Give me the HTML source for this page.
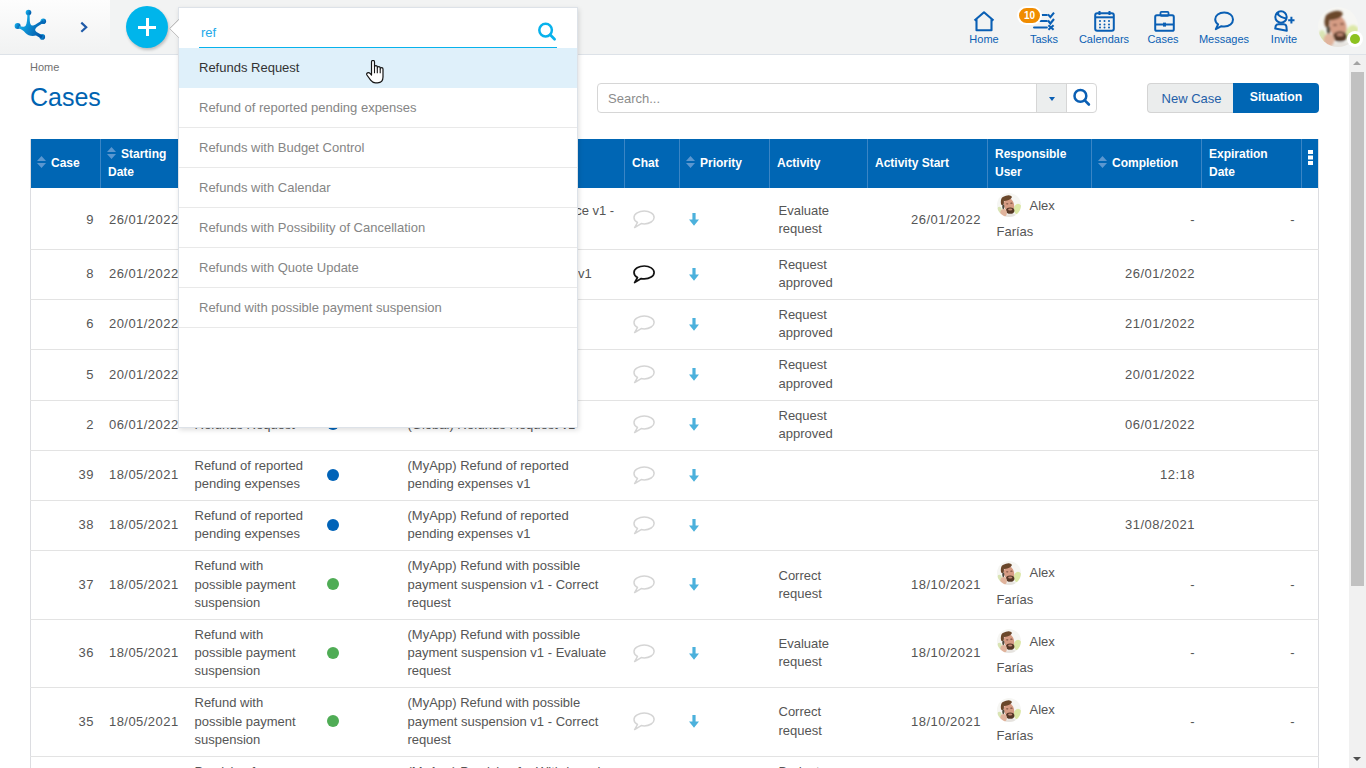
<!DOCTYPE html>
<html><head><meta charset="utf-8">
<style>
*{box-sizing:border-box;margin:0;padding:0}
html,body{width:1366px;height:768px;overflow:hidden;background:#fff;font-family:"Liberation Sans",sans-serif;color:#555}
svg{display:block}
#hdr{position:absolute;left:0;top:0;width:1366px;height:55px;background:#f2f3f3;border-bottom:1px solid #dde2e8}
#logo{position:absolute;left:0;top:0;width:110px;height:54px;background:linear-gradient(#fdfdfd,#f1f2f2)}
#logo svg{position:absolute;left:0;top:0}
#logo #chev{left:79px;top:20.5px}
#chev{position:absolute;left:79px;top:20px}
#plus{position:absolute;left:126px;top:6px;width:42px;height:42px;border-radius:50%;background:#00b5eb;box-shadow:1px 2px 3px rgba(0,0,0,.22)}
#plus:before{content:"";position:absolute;left:12px;top:19.5px;width:18px;height:3px;background:#fff}
#plus:after{content:"";position:absolute;left:19.5px;top:12px;width:3px;height:18px;background:#fff}
.nav{position:absolute;top:0;height:54px;text-align:center;font-size:11px;color:#0a5fb4}
.nav svg{position:absolute}
.nav span{position:absolute;top:32.5px;left:0;width:100%;text-align:center;white-space:nowrap}
#badge{position:absolute;left:1017px;top:6px;width:25px;height:19px;border-radius:10px;background:#f08c00;border:2px solid #fff;color:#fff;font-size:10px;font-weight:bold;text-align:center;line-height:15px}
#avatar{position:absolute;left:1318px;top:7px;width:40px;height:40px}
#online{position:absolute;left:1347px;top:31px;width:16px;height:16px;border-radius:50%;background:#fff}
#online:after{content:"";position:absolute;left:3px;top:3px;width:10px;height:10px;border-radius:50%;background:#8dc21f}
#scroll{position:absolute;left:1349px;top:55px;width:17px;height:713px;background:#f1f1f1}
#thumb{position:absolute;left:2px;top:17px;width:13px;height:514px;background:#c1c1c1}
#sup{position:absolute;left:4px;top:6px;width:0;height:0;border-left:4.5px solid transparent;border-right:4.5px solid transparent;border-bottom:4.5px solid #a3a3a3}
#sdn{position:absolute;left:4px;top:702px;width:0;height:0;border-left:4.5px solid transparent;border-right:4.5px solid transparent;border-top:4.5px solid #505050}
#crumb{position:absolute;left:30px;top:61px;font-size:11px;color:#707070}
#title{position:absolute;left:30px;top:83px;font-size:25px;color:#0063b1;letter-spacing:0}
#search{position:absolute;left:597px;top:83px;width:500px;height:30px;border:1px solid #d6d6d6;border-radius:4px;background:#fff}
#search .ph{position:absolute;left:10px;top:7px;font-size:13px;color:#8c8c8c}
#search .tg{position:absolute;left:438px;top:-1px;width:31px;height:30px;background:#eceeee;border:1px solid #d6d6d6}
#search .tg:after{content:"";position:absolute;left:12px;top:13px;border-left:3.5px solid transparent;border-right:3.5px solid transparent;border-top:4px solid #0a5fb4}
#search svg{position:absolute;left:474px;top:3px}
#btns{position:absolute;left:1147px;top:83px;width:172px;height:30px}
#bnew{position:absolute;left:0;top:0;width:87px;height:30px;background:#ebeded;border:1px solid #d4d4d4;border-right:none;border-radius:4px 0 0 4px;color:#1f5fa8;font-size:13px;line-height:30px;text-align:center;padding-left:1px}
#bsit{position:absolute;left:86px;top:0;width:86px;height:30px;background:#0066b4;border-radius:0 4px 4px 0;color:#fff;font-size:12.3px;font-weight:bold;line-height:29px;text-align:center}
table{border-collapse:collapse;table-layout:fixed}
#tbl{position:absolute;left:30px;top:139px;width:1289px;border-left:1px solid #dcdde1;border-right:1px solid #dcdde1}
#tbl th{background:#0066b4;color:#fff;font-weight:bold;font-size:12px;text-align:left;line-height:18.5px;padding:5px 7px 6px 7px;border-left:1px solid #3a85c5;height:49px;vertical-align:middle}
#tbl th:first-child{border-left:none}
#tbl th .sort{display:inline-block;vertical-align:-1px;margin-right:5px;margin-left:-1px}
#tbl th.menu{padding:11px 0 0 0;text-align:center;vertical-align:top}
#tbl th.menu svg{margin:0 auto}
#tbl td{font-size:13px;line-height:18.2px;padding:5.925px 7px 6.925px 9px;border-bottom:1px solid #e3e3e3;vertical-align:middle;color:#555;overflow:hidden}
#tbl td.r{text-align:right;padding-right:6.5px;padding-left:0;letter-spacing:.5px}
#tbl td.dd{letter-spacing:.45px;padding-left:8.5px}
#tbl td.dt{padding-left:6.5px}
.dot{position:relative;top:-0.5px}
.dot{display:block;width:12px;height:12px;border-radius:50%}
#tbl td.ch{padding-left:8px}
#tbl td.pri{padding-left:9px}
.user{position:relative}
.u1{height:29.95px;white-space:nowrap}
.u1 .av{vertical-align:top;margin-top:0}
.u1 .un1{display:inline-block;vertical-align:top;margin-top:3.5px}
#tbl tr.r1 td{padding-top:7.925px;padding-bottom:4.925px}
#tbl tr.r1 td.us{padding-top:5.425px;padding-bottom:7.425px}
.av{display:inline-block;vertical-align:middle;margin-right:9px}
.av svg{width:24px;height:24px}
.un1{vertical-align:middle}
#dd{position:absolute;left:178px;top:7px;width:400px;height:421px;background:#fff;border:1px solid #dde2e8;box-shadow:1px 2px 5px rgba(0,0,0,.13)}
#ddarrow{position:absolute;left:168.5px;top:19px}
#ddin{position:absolute;left:20px;top:17px;width:358px;height:23px;border-bottom:1px solid #08b2ec;font-size:13px;color:#22aaea;padding-left:2px;line-height:16px}
#ddin svg{position:absolute;left:338px;top:-4px}
#ddlist{position:absolute;left:0;top:40px;width:398px}
.it{height:40px;border-bottom:1px solid #e9e9e9;font-size:13px;color:#858585;padding-left:20px;line-height:39px;white-space:nowrap}
.it.hl{background:#dff0fa;color:#333;border-bottom-color:#dff0fa}
#cursor{position:absolute;left:366px;top:60px}
</style></head><body>
<div id="hdr">
  <div id="logo">
    <svg width="60" height="54" viewBox="0 0 60 54">
      <defs><linearGradient id="lg" x1="0" y1="0.3" x2="1" y2="0.8"><stop offset="0" stop-color="#16b6ef"/><stop offset="1" stop-color="#004ea3"/></linearGradient></defs>
      <g fill="url(#lg)" stroke="url(#lg)">
        <circle cx="28.5" cy="12.6" r="2.8" stroke="none"/>
        <circle cx="17.6" cy="25.9" r="3" stroke="none"/>
        <circle cx="43.3" cy="21.2" r="2.8" stroke="none"/>
        <circle cx="42.3" cy="36.9" r="2.8" stroke="none"/>
        <path d="M27.4 14.5 C27.3 19 27 23.5 25.6 25.8 C24.2 27.4 21.5 26.8 19.3 26 L18.6 28.3 C21 29 23.5 30.6 25.5 33 C28 35.8 32 36.6 36 35.6 L41.2 38.4 L43 35.6 C39.6 33.6 36.4 32.6 35.4 30.8 C34.6 29 36 27.6 38 26.2 L43.9 22.4 L42.7 20 C39 22.4 35.6 24.8 33.2 25.4 C31 25.9 30.1 24.4 29.8 21 L29.6 14.5 Z" stroke="none"/>
      </g>
    </svg>
    <svg id="chev" width="10" height="14" viewBox="0 0 10 14"><path d="M2.3 1.6 L7.2 6.2 L2.3 10.8" fill="none" stroke="#1e5aa8" stroke-width="2.2"/></svg>
  </div>
  <div id="plus"></div>
  <div class="nav" style="left:964px;width:40px">
    <svg style="left:9px;top:11px" width="22" height="21" viewBox="0 0 22 21"><path d="M1.5 9.5 L11 1.3 L20.5 9.5 M3.5 8 V19.3 H18.5 V8" fill="none" stroke="#0a5fb4" stroke-width="2.1" stroke-linejoin="round"/></svg>
    <span>Home</span>
  </div>
  <div class="nav" style="left:1024px;width:40px">
    <svg style="left:9px;top:11px" width="24" height="20" viewBox="0 0 24 20"><path d="M9 4 H13.8 M7 10 H13.8 M1.1 16.5 H13.8" stroke="#0a5fb4" stroke-width="2.2" fill="none" stroke-linecap="round"/><path d="M15 3.4 L17.4 6.1 L21 1.6 M15 9.5 L17.4 12.5 L21 8" stroke="#0a5fb4" stroke-width="2.1" fill="none"/><path d="M15.4 14.2 L20.6 18.8 M20.6 14.2 L15.4 18.8" stroke="#0a5fb4" stroke-width="2.1" fill="none"/></svg>
    <span>Tasks</span>
  </div>
  <div id="badge">10</div>
  <div class="nav" style="left:1077px;width:54px">
    <svg style="left:17px;top:10px" width="21" height="22" viewBox="0 0 21 22"><rect x="1.2" y="3.2" width="18.6" height="17.5" rx="2" fill="none" stroke="#0a5fb4" stroke-width="2"/><path d="M1.5 7.3 H19.5" stroke="#0a5fb4" stroke-width="2"/><path d="M5.5 1 V5 M15.5 1 V5" stroke="#0a5fb4" stroke-width="2"/><g fill="#0a5fb4"><circle cx="6" cy="11" r="1"/><circle cx="10.5" cy="11" r="1"/><circle cx="15" cy="11" r="1"/><circle cx="6" cy="14.4" r="1"/><circle cx="10.5" cy="14.4" r="1"/><circle cx="15" cy="14.4" r="1"/><circle cx="6" cy="17.6" r="1"/><circle cx="10.5" cy="17.6" r="1"/><circle cx="15" cy="17.6" r="1"/></g></svg>
    <span>Calendars</span>
  </div>
  <div class="nav" style="left:1143px;width:40px">
    <svg style="left:11px;top:10px" width="21" height="22" viewBox="0 0 21 22"><rect x="6.5" y="1.8" width="8" height="4" rx="1" fill="none" stroke="#0a5fb4" stroke-width="1.8"/><rect x="1.2" y="5.3" width="18.6" height="15.5" rx="1.6" fill="none" stroke="#0a5fb4" stroke-width="2"/><path d="M1.5 14.5 H19.5" stroke="#0a5fb4" stroke-width="2"/><rect x="9" y="12.6" width="3" height="4" fill="#0a5fb4"/></svg>
    <span>Cases</span>
  </div>
  <div class="nav" style="left:1196px;width:56px">
    <svg style="left:17px;top:11px" width="22" height="20" viewBox="0 0 22 20"><path d="M11.2 1.6 C6 1.6 2.2 4.5 2.2 8.3 c0 2.1 1.1 3.8 2.9 5 L2.8 18.2 l5.6-3 c0.9 0.2 1.8 0.3 2.8 0.3 5.1 0 8.8-3 8.8-7 S16.3 1.6 11.2 1.6z" fill="none" stroke="#0a5fb4" stroke-width="2" stroke-linejoin="round"/></svg>
    <span>Messages</span>
  </div>
  <div class="nav" style="left:1264px;width:40px">
    <svg style="left:9px;top:10px" width="23" height="22" viewBox="0 0 23 22"><circle cx="8" cy="7" r="5.7" fill="none" stroke="#0a5fb4" stroke-width="2"/><path d="M3.8 3.4 Q7.5 7.8 13.8 8.4" fill="none" stroke="#0a5fb4" stroke-width="2"/><path d="M2.8 4.6 Q3.8 2.4 6.2 1.6 L6.2 5.2 Z" fill="#0a5fb4"/><path d="M2.2 18.6 L2.7 16 Q3.4 14.3 5.5 14.3 H10.6 Q12.8 14.3 13.4 16.4 L13.8 20.8 Z" fill="none" stroke="#0a5fb4" stroke-width="2" stroke-linejoin="round"/><path d="M15.2 10.2 H21.5 M18.4 6.8 V13.6" stroke="#0a5fb4" stroke-width="2"/></svg>
    <span>Invite</span>
  </div>
  <div id="avatar"><svg width="40" height="40" viewBox="0 0 40 40"><defs><clipPath id="avc"><circle cx="20" cy="20" r="20"/></clipPath><filter id="avb" x="-20%" y="-20%" width="140%" height="140%"><feGaussianBlur stdDeviation="1.1"/></filter></defs>
<g id="avatar-g" clip-path="url(#avc)"><rect width="40" height="40" fill="#f6f6f3"/><g filter="url(#avb)">
<ellipse cx="35" cy="27" rx="7" ry="9" fill="#dce8a6"/><ellipse cx="4" cy="30" rx="4" ry="7" fill="#d9e4b4"/>
<ellipse cx="24" cy="40" rx="12" ry="5" fill="#e6e3df"/>
<ellipse cx="20" cy="20" rx="8.5" ry="11.5" fill="#d69c84" transform="rotate(-12 20 20)"/>
<ellipse cx="16" cy="8.5" rx="9" ry="4.2" fill="#6a462c" transform="rotate(-15 16 8.5)"/>
<ellipse cx="9" cy="15" rx="2.6" ry="5.5" fill="#6a462c"/>
<ellipse cx="22" cy="29.5" rx="7" ry="5.2" fill="#553826"/>
<ellipse cx="22" cy="27.5" rx="3.5" ry="1.6" fill="#c48a76"/>
<ellipse cx="11" cy="33" rx="5.5" ry="6.5" fill="#e0b39c"/>
<ellipse cx="10.5" cy="23" rx="1.8" ry="4" fill="#4f4a3c"/>
<ellipse cx="17" cy="18" rx="2" ry="1" fill="#7a5040"/><ellipse cx="24" cy="17" rx="2" ry="1" fill="#7a5040"/>
</g></g></svg></div>
  <div id="online"></div>
</div>
<div id="scroll"><div id="sup"></div><div id="thumb"></div><div id="sdn"></div></div>
<div id="crumb">Home</div>
<div id="title">Cases</div>
<div id="search"><span class="ph">Search...</span><div class="tg"></div>
 <svg width="20" height="20" viewBox="0 0 20 20"><circle cx="8.4" cy="8.9" r="5.9" fill="none" stroke="#0a5fb4" stroke-width="2.5"/><path d="M12.8 13.3 L16.9 17.5" stroke="#0a5fb4" stroke-width="2.6" stroke-linecap="round"/></svg>
</div>
<div id="btns"><div id="bnew">New Case</div><div id="bsit">Situation</div></div>
<table id="tbl">
<colgroup><col style="width:70px"><col style="width:85px"><col style="width:135px"><col style="width:78px"><col style="width:226px"><col style="width:55px"><col style="width:90px"><col style="width:98px"><col style="width:120px"><col style="width:104px"><col style="width:110px"><col style="width:100px"><col style="width:17px"></colgroup>
<thead><tr><th><svg class="sort" width="9" height="12" viewBox="0 0 9 12"><path d="M4.5 0L9 5H0zM0 7h9l-4.5 5z" fill="#5b97d0"/></svg>Case</th><th><svg class="sort" width="9" height="12" viewBox="0 0 9 12"><path d="M4.5 0L9 5H0zM0 7h9l-4.5 5z" fill="#5b97d0"/></svg>Starting Date</th><th><svg class="sort" width="9" height="12" viewBox="0 0 9 12"><path d="M4.5 0L9 5H0zM0 7h9l-4.5 5z" fill="#5b97d0"/></svg>Process</th><th>Status</th><th>Subject</th><th>Chat</th><th><svg class="sort" width="9" height="12" viewBox="0 0 9 12"><path d="M4.5 0L9 5H0zM0 7h9l-4.5 5z" fill="#5b97d0"/></svg>Priority</th><th>Activity</th><th>Activity Start</th><th>Responsible User</th><th><svg class="sort" width="9" height="12" viewBox="0 0 9 12"><path d="M4.5 0L9 5H0zM0 7h9l-4.5 5z" fill="#5b97d0"/></svg>Completion</th><th>Expiration Date</th><th class="menu"><svg width="5" height="15" viewBox="0 0 5 15"><rect x="0" y="0" width="5" height="4" fill="#fff"/><rect x="0" y="5.5" width="5" height="4" fill="#fff"/><rect x="0" y="11" width="5" height="4" fill="#fff"/></svg></th></tr></thead>
<tbody>
<tr class="r1"><td class="r">9</td><td class="dd">26/01/2022</td><td class="pr">Refunds with Budget Control</td><td class="dt"><span class="dot" style="background:#0063b8"></span></td><td class="ds">(MyApp) Refunds with Advance v1 - Evaluate request</td><td class="ch"><svg width="22" height="19" viewBox="0 0 22 19"><path d="M11.3 1C6 1 1 3.6 1 7.4c0 2.1 1.3 3.9 3.5 5.1L1.6 17.6l6.6-4c.9.2 2 .3 3.1.3 5.3 0 9.8-2.9 9.8-6.5S16.6 1 11.3 1z" fill="none" stroke="#d5d5d5" stroke-width="1.5" stroke-linejoin="round"/></svg></td><td class="pri"><svg width="10" height="13" viewBox="0 0 10 13"><path d="M3.4 0h3.2v6.5H10L5 12.7 0 6.5h3.4z" fill="#4cb1dc"/></svg></td><td>Evaluate request</td><td class="r">26/01/2022</td><td class="us"><div class="user"><div class="u1"><span class="av" style="width:24px;height:24px"><svg viewBox="0 0 40 40"><use href="#avatar-g"/></svg></span><span class="un1">Alex</span></div><div class="un2">Farías</div></div></td><td class="r">-</td><td class="r">-</td><td></td></tr>
<tr><td class="r">8</td><td class="dd">26/01/2022</td><td class="pr">Refunds with Calendar</td><td class="dt"><span class="dot" style="background:#0063b8"></span></td><td class="ds">(MyApp) Refunds with Quote v1</td><td class="ch"><svg width="22" height="19" viewBox="0 0 22 19"><path d="M11.3 1C6 1 1 3.6 1 7.4c0 2.1 1.3 3.9 3.5 5.1L1.6 17.6l6.6-4c.9.2 2 .3 3.1.3 5.3 0 9.8-2.9 9.8-6.5S16.6 1 11.3 1z" fill="none" stroke="#111" stroke-width="1.7" stroke-linejoin="round"/></svg></td><td class="pri"><svg width="10" height="13" viewBox="0 0 10 13"><path d="M3.4 0h3.2v6.5H10L5 12.7 0 6.5h3.4z" fill="#4cb1dc"/></svg></td><td>Request approved</td><td class="r"></td><td class="us"></td><td class="r">26/01/2022</td><td class="r"></td><td></td></tr>
<tr><td class="r">6</td><td class="dd">20/01/2022</td><td class="pr">Refunds Request</td><td class="dt"><span class="dot" style="background:#0063b8"></span></td><td class="ds">(Global) Refunds v1</td><td class="ch"><svg width="22" height="19" viewBox="0 0 22 19"><path d="M11.3 1C6 1 1 3.6 1 7.4c0 2.1 1.3 3.9 3.5 5.1L1.6 17.6l6.6-4c.9.2 2 .3 3.1.3 5.3 0 9.8-2.9 9.8-6.5S16.6 1 11.3 1z" fill="none" stroke="#d5d5d5" stroke-width="1.5" stroke-linejoin="round"/></svg></td><td class="pri"><svg width="10" height="13" viewBox="0 0 10 13"><path d="M3.4 0h3.2v6.5H10L5 12.7 0 6.5h3.4z" fill="#4cb1dc"/></svg></td><td>Request approved</td><td class="r"></td><td class="us"></td><td class="r">21/01/2022</td><td class="r"></td><td></td></tr>
<tr><td class="r">5</td><td class="dd">20/01/2022</td><td class="pr">Refunds Request</td><td class="dt"><span class="dot" style="background:#0063b8"></span></td><td class="ds">(Global) Refunds v1</td><td class="ch"><svg width="22" height="19" viewBox="0 0 22 19"><path d="M11.3 1C6 1 1 3.6 1 7.4c0 2.1 1.3 3.9 3.5 5.1L1.6 17.6l6.6-4c.9.2 2 .3 3.1.3 5.3 0 9.8-2.9 9.8-6.5S16.6 1 11.3 1z" fill="none" stroke="#d5d5d5" stroke-width="1.5" stroke-linejoin="round"/></svg></td><td class="pri"><svg width="10" height="13" viewBox="0 0 10 13"><path d="M3.4 0h3.2v6.5H10L5 12.7 0 6.5h3.4z" fill="#4cb1dc"/></svg></td><td>Request approved</td><td class="r"></td><td class="us"></td><td class="r">20/01/2022</td><td class="r"></td><td></td></tr>
<tr><td class="r">2</td><td class="dd">06/01/2022</td><td class="pr">Refunds Request</td><td class="dt"><span class="dot" style="background:#0063b8"></span></td><td class="ds">(Global) Refunds Request v1</td><td class="ch"><svg width="22" height="19" viewBox="0 0 22 19"><path d="M11.3 1C6 1 1 3.6 1 7.4c0 2.1 1.3 3.9 3.5 5.1L1.6 17.6l6.6-4c.9.2 2 .3 3.1.3 5.3 0 9.8-2.9 9.8-6.5S16.6 1 11.3 1z" fill="none" stroke="#d5d5d5" stroke-width="1.5" stroke-linejoin="round"/></svg></td><td class="pri"><svg width="10" height="13" viewBox="0 0 10 13"><path d="M3.4 0h3.2v6.5H10L5 12.7 0 6.5h3.4z" fill="#4cb1dc"/></svg></td><td>Request approved</td><td class="r"></td><td class="us"></td><td class="r">06/01/2022</td><td class="r"></td><td></td></tr>
<tr><td class="r">39</td><td class="dd">18/05/2021</td><td class="pr">Refund of reported pending expenses</td><td class="dt"><span class="dot" style="background:#0063b8"></span></td><td class="ds">(MyApp) Refund of reported pending expenses v1</td><td class="ch"><svg width="22" height="19" viewBox="0 0 22 19"><path d="M11.3 1C6 1 1 3.6 1 7.4c0 2.1 1.3 3.9 3.5 5.1L1.6 17.6l6.6-4c.9.2 2 .3 3.1.3 5.3 0 9.8-2.9 9.8-6.5S16.6 1 11.3 1z" fill="none" stroke="#d5d5d5" stroke-width="1.5" stroke-linejoin="round"/></svg></td><td class="pri"><svg width="10" height="13" viewBox="0 0 10 13"><path d="M3.4 0h3.2v6.5H10L5 12.7 0 6.5h3.4z" fill="#4cb1dc"/></svg></td><td></td><td class="r"></td><td class="us"></td><td class="r">12:18</td><td class="r"></td><td></td></tr>
<tr><td class="r">38</td><td class="dd">18/05/2021</td><td class="pr">Refund of reported pending expenses</td><td class="dt"><span class="dot" style="background:#0063b8"></span></td><td class="ds">(MyApp) Refund of reported pending expenses v1</td><td class="ch"><svg width="22" height="19" viewBox="0 0 22 19"><path d="M11.3 1C6 1 1 3.6 1 7.4c0 2.1 1.3 3.9 3.5 5.1L1.6 17.6l6.6-4c.9.2 2 .3 3.1.3 5.3 0 9.8-2.9 9.8-6.5S16.6 1 11.3 1z" fill="none" stroke="#d5d5d5" stroke-width="1.5" stroke-linejoin="round"/></svg></td><td class="pri"><svg width="10" height="13" viewBox="0 0 10 13"><path d="M3.4 0h3.2v6.5H10L5 12.7 0 6.5h3.4z" fill="#4cb1dc"/></svg></td><td></td><td class="r"></td><td class="us"></td><td class="r">31/08/2021</td><td class="r"></td><td></td></tr>
<tr><td class="r">37</td><td class="dd">18/05/2021</td><td class="pr">Refund with possible payment suspension</td><td class="dt"><span class="dot" style="background:#4fac55"></span></td><td class="ds">(MyApp) Refund with possible payment suspension v1 - Correct request</td><td class="ch"><svg width="22" height="19" viewBox="0 0 22 19"><path d="M11.3 1C6 1 1 3.6 1 7.4c0 2.1 1.3 3.9 3.5 5.1L1.6 17.6l6.6-4c.9.2 2 .3 3.1.3 5.3 0 9.8-2.9 9.8-6.5S16.6 1 11.3 1z" fill="none" stroke="#d5d5d5" stroke-width="1.5" stroke-linejoin="round"/></svg></td><td class="pri"><svg width="10" height="13" viewBox="0 0 10 13"><path d="M3.4 0h3.2v6.5H10L5 12.7 0 6.5h3.4z" fill="#4cb1dc"/></svg></td><td>Correct request</td><td class="r">18/10/2021</td><td class="us"><div class="user"><div class="u1"><span class="av" style="width:24px;height:24px"><svg viewBox="0 0 40 40"><use href="#avatar-g"/></svg></span><span class="un1">Alex</span></div><div class="un2">Farías</div></div></td><td class="r">-</td><td class="r">-</td><td></td></tr>
<tr><td class="r">36</td><td class="dd">18/05/2021</td><td class="pr">Refund with possible payment suspension</td><td class="dt"><span class="dot" style="background:#4fac55"></span></td><td class="ds">(MyApp) Refund with possible payment suspension v1 - Evaluate request</td><td class="ch"><svg width="22" height="19" viewBox="0 0 22 19"><path d="M11.3 1C6 1 1 3.6 1 7.4c0 2.1 1.3 3.9 3.5 5.1L1.6 17.6l6.6-4c.9.2 2 .3 3.1.3 5.3 0 9.8-2.9 9.8-6.5S16.6 1 11.3 1z" fill="none" stroke="#d5d5d5" stroke-width="1.5" stroke-linejoin="round"/></svg></td><td class="pri"><svg width="10" height="13" viewBox="0 0 10 13"><path d="M3.4 0h3.2v6.5H10L5 12.7 0 6.5h3.4z" fill="#4cb1dc"/></svg></td><td>Evaluate request</td><td class="r">18/10/2021</td><td class="us"><div class="user"><div class="u1"><span class="av" style="width:24px;height:24px"><svg viewBox="0 0 40 40"><use href="#avatar-g"/></svg></span><span class="un1">Alex</span></div><div class="un2">Farías</div></div></td><td class="r">-</td><td class="r">-</td><td></td></tr>
<tr><td class="r">35</td><td class="dd">18/05/2021</td><td class="pr">Refund with possible payment suspension</td><td class="dt"><span class="dot" style="background:#4fac55"></span></td><td class="ds">(MyApp) Refund with possible payment suspension v1 - Correct request</td><td class="ch"><svg width="22" height="19" viewBox="0 0 22 19"><path d="M11.3 1C6 1 1 3.6 1 7.4c0 2.1 1.3 3.9 3.5 5.1L1.6 17.6l6.6-4c.9.2 2 .3 3.1.3 5.3 0 9.8-2.9 9.8-6.5S16.6 1 11.3 1z" fill="none" stroke="#d5d5d5" stroke-width="1.5" stroke-linejoin="round"/></svg></td><td class="pri"><svg width="10" height="13" viewBox="0 0 10 13"><path d="M3.4 0h3.2v6.5H10L5 12.7 0 6.5h3.4z" fill="#4cb1dc"/></svg></td><td>Correct request</td><td class="r">18/10/2021</td><td class="us"><div class="user"><div class="u1"><span class="av" style="width:24px;height:24px"><svg viewBox="0 0 40 40"><use href="#avatar-g"/></svg></span><span class="un1">Alex</span></div><div class="un2">Farías</div></div></td><td class="r">-</td><td class="r">-</td><td></td></tr>
<tr><td class="r">34</td><td class="dd">18/05/2021</td><td class="pr">Provision for Withdrawal with Budget</td><td class="dt"><span class="dot" style="background:#4fac55"></span></td><td class="ds">(MyApp) Provision for Withdrawal with Budget v1 - Budget approval request</td><td class="ch"><svg width="22" height="19" viewBox="0 0 22 19"><path d="M11.3 1C6 1 1 3.6 1 7.4c0 2.1 1.3 3.9 3.5 5.1L1.6 17.6l6.6-4c.9.2 2 .3 3.1.3 5.3 0 9.8-2.9 9.8-6.5S16.6 1 11.3 1z" fill="none" stroke="#d5d5d5" stroke-width="1.5" stroke-linejoin="round"/></svg></td><td class="pri"><svg width="10" height="13" viewBox="0 0 10 13"><path d="M3.4 0h3.2v6.5H10L5 12.7 0 6.5h3.4z" fill="#4cb1dc"/></svg></td><td>Budget approval request</td><td class="r">18/10/2021</td><td class="us"></td><td class="r">-</td><td class="r">-</td><td></td></tr>
</tbody>
</table>
<div id="dd">
  <div id="ddin">ref
    <svg width="20" height="22" viewBox="0 0 20 22"><circle cx="8.6" cy="9.1" r="6.3" fill="none" stroke="#08b2ec" stroke-width="2.5"/><path d="M13.2 13.8 L17.6 18.2" stroke="#08b2ec" stroke-width="2.7" stroke-linecap="round"/></svg>
  </div>
  <div id="ddlist"><div class="it hl">Refunds Request</div><div class="it">Refund of reported pending expenses</div><div class="it">Refunds with Budget Control</div><div class="it">Refunds with Calendar</div><div class="it">Refunds with Possibility of Cancellation</div><div class="it">Refunds with Quote Update</div><div class="it">Refund with possible payment suspension</div></div>
</div>
<svg id="ddarrow" width="11" height="20" viewBox="0 0 11 20"><path d="M10.5 0.3 L0.7 9.6 L10.5 18.9 Z" fill="#fff" stroke="none"/><path d="M9.8 0.5 L0.7 9.6" stroke="#a8a8a8" stroke-width="1"/><path d="M0.7 9.6 L9.8 18.7" stroke="#bdbdbd" stroke-width="1"/></svg>
<svg id="cursor" width="19" height="24" viewBox="0 0 19 24"><path d="M5.5 15 L5.5 2 Q5.5 0.4 7 0.4 Q8.5 0.4 8.5 2 L8.5 6.8 Q8.6 5.6 9.9 5.6 Q11.3 5.6 11.3 7 L11.3 7.8 Q11.4 6.6 12.7 6.6 Q14.2 6.6 14.2 8 L14.2 8.8 Q14.3 7.6 15.6 7.6 Q17 7.6 17 9 L17 17 Q17 22.8 11.5 22.8 L9.5 22.8 Q6.5 22.8 4.6 20.2 L0.9 15 Q0.2 13.6 1.5 12.9 Q3 12.3 4.3 13.7 Z" fill="#fff" stroke="#151515" stroke-width="1.2" stroke-linejoin="round"/><path d="M8.5 7 V13.3 M11.3 8 V13.3 M14.2 9 V13.3" stroke="#151515" stroke-width="1.1"/></svg>
</body></html>
